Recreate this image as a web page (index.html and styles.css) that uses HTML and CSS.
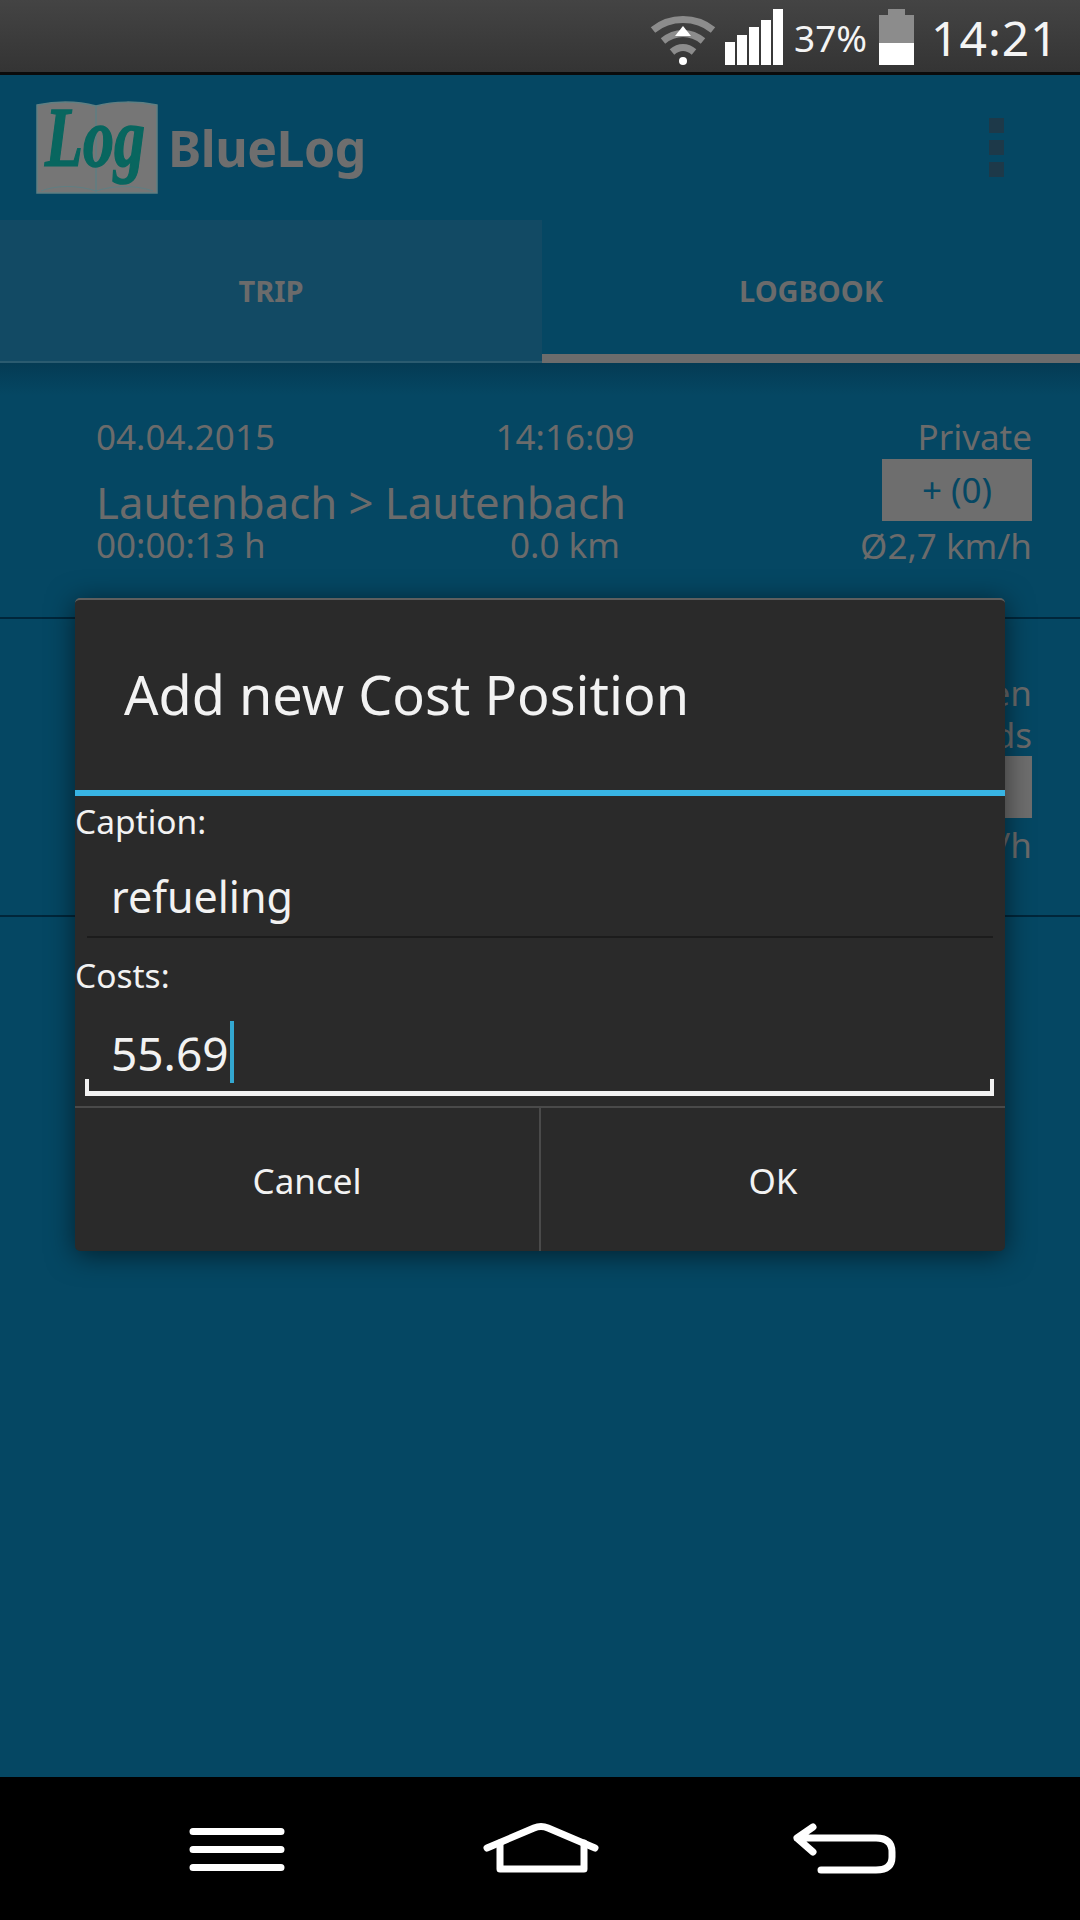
FILE: index.html
```html
<!DOCTYPE html>
<html lang="en">
  <head>
    <meta charset="UTF-8" />
    <meta name="viewport" content="width=device-width, initial-scale=1.0" />
    <title>BlueLog</title>
    <link rel="stylesheet" href="styles.css">
  </head>
  <body>
    <div class="screen">
      <div class="status-bar">
        <svg class="icon-wifi" width="66" height="52" viewBox="0 0 66 52">
          <g fill="none" stroke="#8c8c8c" stroke-width="7">
            <path d="M3 15 C20 1 46 1 63 15" />
            <path d="M13 26 C25 16 41 16 53 26" />
            <path d="M22 37 C29 31 37 31 44 37" />
          </g>
          <circle cx="33" cy="46" r="4" fill="#fff" />
          <path d="M33 11 L41 21 L25 21 Z" fill="#fff" />
        </svg>
        <div class="signal">
          <span class="bar bar-1"></span>
          <span class="bar bar-2"></span>
          <span class="bar bar-3"></span>
          <span class="bar bar-4"></span>
          <span class="bar bar-5"></span>
        </div>
        <span class="battery-text">37%</span>
        <div class="battery">
          <span class="battery-nub"></span>
          <span class="battery-empty"></span>
          <span class="battery-full"></span>
        </div>
        <span class="clock">14:21</span>
      </div>

      <div class="action-bar">
        <svg class="logo" width="122" height="96" viewBox="0 0 122 96">
          <path d="M1 5 C20 1 42 1 60 6 C78 1 102 1 121 5 V93 H1 Z" fill="#767676" stroke="#5f7f83" stroke-width="1.5" />
          <path d="M60 6 V93" stroke="#5f7f83" stroke-width="1.5" />
          <path d="M5 91 C20 85 42 85 60 91 C78 85 100 85 117 91" fill="none" stroke="#5f7f83" stroke-width="1" />
          <text class="logo-text" transform="translate(9 66) scale(0.74 1)">Log</text>
        </svg>
        <span class="app-name">BlueLog</span>
        <div class="overflow">
          <span></span>
          <span></span>
          <span></span>
        </div>
      </div>

      <div class="tabs">
        <div class="tab tab-pressed">TRIP</div>
        <div class="tab tab-active">LOGBOOK</div>
      </div>

      <div class="trip-list">
        <div class="trip trip-first">
          <div class="trip-main">
            <span class="trip-text">04.04.2015</span>
            <span class="trip-text trip-mid">14:16:09</span>
            <span class="trip-route">Lautenbach &gt; Lautenbach</span>
            <span class="trip-text trip-low">00:00:13 h</span>
            <span class="trip-text trip-mid trip-low">0.0 km</span>
          </div>
          <div class="trip-side">
            <span class="trip-text">Private</span>
            <div class="cost-button">+ (0)</div>
            <span class="trip-text">Ø2,7 km/h</span>
          </div>
        </div>
        <div class="trip trip-second">
          <div class="trip-side">
            <span class="trip-text side-small">Visit between</span>
            <span class="trip-text side-small">friends</span>
            <div class="cost-button"></div>
            <span class="trip-text side-low">Ø2,7 km/h</span>
          </div>
        </div>
      </div>

      <div class="nav-bar">
        <svg width="1080" height="143" viewBox="0 0 1080 143">
          <g fill="none" stroke="#fff" stroke-width="7" stroke-linecap="round" stroke-linejoin="round">
            <path d="M193 54.5 H281 M193 72.5 H281 M193 90.5 H281" />
            <path d="M487 71 L534 51 Q541 48 548 51 L595 71" />
            <path d="M500 66 V92 H584 V66" />
            <path d="M813 50 L797 61 L813 75 M797 61 H876 Q892 61 892 75 V80 Q892 93 876 93 H821" />
          </g>
        </svg>
      </div>

      <div class="dialog">
        <div class="dialog-title">Add new Cost Position</div>
        <div class="dialog-body">
          <div class="field-label">Caption:</div>
          <div class="field field-plain"><span>refueling</span></div>
          <div class="field-label field-label-2">Costs:</div>
          <div class="field field-focus"><span>55.69</span><i class="caret"></i></div>
        </div>
        <div class="dialog-buttons">
          <div class="dialog-button">Cancel</div>
          <div class="dialog-button">OK</div>
        </div>
      </div>
    </div>
  </body>
</html>
```

FILE: styles.css
```css
* {
  box-sizing: border-box;
}
body {
  margin: 0;
  font-family: "Noto Sans", "Open Sans", sans-serif;
  background-color: #054763;
}
.screen {
  position: relative;
  width: 1080px;
  height: 1920px;
  overflow: hidden;
  display: flex;
  flex-direction: column;
  background-color: #054763;
}

/* status bar */
.status-bar {
  height: 75px;
  flex: none;
  display: flex;
  align-items: flex-start;
  padding-left: 650px;
  background: linear-gradient(#444444, #343434);
  border-bottom: 3px solid #0b0b0b;
  color: #f4f4f4;
}
.icon-wifi {
  margin-top: 15px;
}
.signal {
  display: flex;
  align-items: flex-end;
  gap: 2px;
  height: 56px;
  margin: 9px 0 0 9px;
}
.bar {
  width: 10px;
  background-color: #fff;
}
.bar-1 { height: 23px; }
.bar-2 { height: 30px; }
.bar-3 { height: 38px; }
.bar-4 { height: 45px; }
.bar-5 { height: 56px; }
.battery-text {
  font-size: 37px;
  line-height: 76px;
  margin-left: 11px;
}
.battery {
  width: 35px;
  height: 56px;
  margin: 9px 0 0 12px;
  display: flex;
  flex-direction: column;
  align-items: center;
}
.battery-nub {
  width: 17px;
  height: 6px;
  background-color: #8c8c8c;
}
.battery-empty {
  width: 100%;
  height: 28px;
  background-color: #8c8c8c;
}
.battery-full {
  width: 100%;
  height: 22px;
  background-color: #fff;
}
.clock {
  font-size: 48px;
  line-height: 76px;
  margin-left: 17px;
  letter-spacing: 1px;
}

/* action bar */
.action-bar {
  height: 145px;
  flex: none;
  display: flex;
  align-items: center;
  padding: 0 76px 0 36px;
}
.logo {
  flex: none;
}
.logo-text {
  font-family: "Liberation Serif", serif;
  font-weight: bold;
  font-style: italic;
  font-size: 84px;
  fill: #08665f;
  stroke: #08665f;
  stroke-width: 1.5px;
}
.app-name {
  margin-left: 10px;
  font-size: 50px;
  letter-spacing: -0.5px;
  font-weight: bold;
  color: #6e6e6e;
  flex: 1;
}
.overflow {
  display: flex;
  flex-direction: column;
  gap: 7px;
}
.overflow span {
  width: 15px;
  height: 15px;
  background-color: #1d3949;
}

/* tabs */
.tabs {
  height: 143px;
  flex: none;
  display: grid;
  grid-template-columns: 542px 538px;
}
.tab {
  display: flex;
  align-items: center;
  justify-content: center;
  font-size: 29px;
  font-weight: bold;
  color: #6b6b6b;
}
.tab-pressed {
  background-color: #124a64;
  border-bottom: 2px solid #2a5b70;
}
.tab-active {
  border-bottom: 9px solid #6c6c6c;
  padding-top: 7px;
}

/* trip list */
.trip-list {
  flex: 1;
  background: linear-gradient(#043b54, #054763 32px) no-repeat;
  background-size: 100% 40px;
}
.trip {
  display: flex;
  justify-content: space-between;
  border-bottom: 2px solid #01263a;
  padding-right: 48px;
}
.trip-first {
  height: 256px;
  padding-top: 49px;
  padding-left: 96px;
}
.trip-second {
  height: 298px;
  justify-content: flex-end;
  padding-top: 53px;
}
.trip-main {
  display: grid;
  grid-template-columns: 301px 336px;
  align-content: start;
}
.trip-text {
  font-size: 35px;
  line-height: 50px;
  color: #6b6b6b;
}
.trip-mid {
  text-align: center;
}
.trip-route {
  grid-column: 1 / 3;
  font-size: 43.7px;
  line-height: 56px;
  color: #6b6b6b;
  white-space: nowrap;
  margin-top: 12px;
}
.trip-low {
  line-height: 30px;
}
.trip-side {
  display: flex;
  flex-direction: column;
  align-items: flex-end;
}
.side-small {
  line-height: 42px;
}
.side-low {
  margin-top: 2px;
}
.cost-button {
  width: 150px;
  height: 62px;
  background-color: #6e6e6e;
  color: #054763;
  font-size: 35px;
  line-height: 62px;
  text-align: center;
  flex: none;
}
.trip-first .trip-text + .cost-button {
  margin-top: -3px;
}

/* nav bar */
.nav-bar {
  height: 143px;
  flex: none;
  background-color: #000;
}
.nav-bar svg {
  display: block;
}

/* dialog */
.dialog {
  position: absolute;
  top: 598px;
  left: 75px;
  width: 930px;
  height: 653px;
  display: flex;
  flex-direction: column;
  background-color: #2a2a2a;
  border-top: 2px solid #5f5f5f;
  border-radius: 5px;
  box-shadow: 0 4px 28px rgba(0, 0, 0, 0.55);
  color: #f2f2f2;
}
.dialog-title {
  height: 196px;
  flex: none;
  padding: 0 0 2px 49px;
  display: flex;
  align-items: center;
  font-size: 54px;
  border-bottom: 6px solid #38b4e4;
}
.dialog-body {
  flex: 1;
  padding: 0 12px 0 0;
}
.field-label {
  font-size: 33.5px;
  line-height: 50px;
  margin-right: -12px;
}
.field-label-2 {
  margin-top: 12px;
}
.field {
  display: flex;
  align-items: flex-end;
  margin-left: 12px;
  padding-left: 24px;
  font-size: 43px;
  line-height: 64px;
}
.field-plain {
  height: 92px;
  padding-bottom: 7px;
  border-bottom: 2px solid #1c1c1c;
}
.field-focus {
  position: relative;
  height: 96px;
  margin: 0 -1px 0 10px;
  padding-left: 26px;
  padding-bottom: 6px;
  font-size: 46px;
  border-bottom: 5px solid #f2f2f2;
}
.field-focus::before,
.field-focus::after {
  content: "";
  position: absolute;
  bottom: 0;
  width: 4px;
  height: 12px;
  background-color: #f2f2f2;
}
.field-focus::before {
  left: 0;
}
.field-focus::after {
  right: 0;
}
.caret {
  width: 4px;
  height: 62px;
  margin: 0 0 2px 1px;
  background-color: #33a7d0;
}
.dialog-buttons {
  height: 145px;
  flex: none;
  display: grid;
  grid-template-columns: 464px 466px;
  border-top: 2px solid #4a4a4a;
}
.dialog-button {
  display: flex;
  align-items: center;
  justify-content: center;
  padding-top: 2px;
  font-size: 35px;
}
.dialog-button + .dialog-button {
  border-left: 2px solid #4a4a4a;
}
```
